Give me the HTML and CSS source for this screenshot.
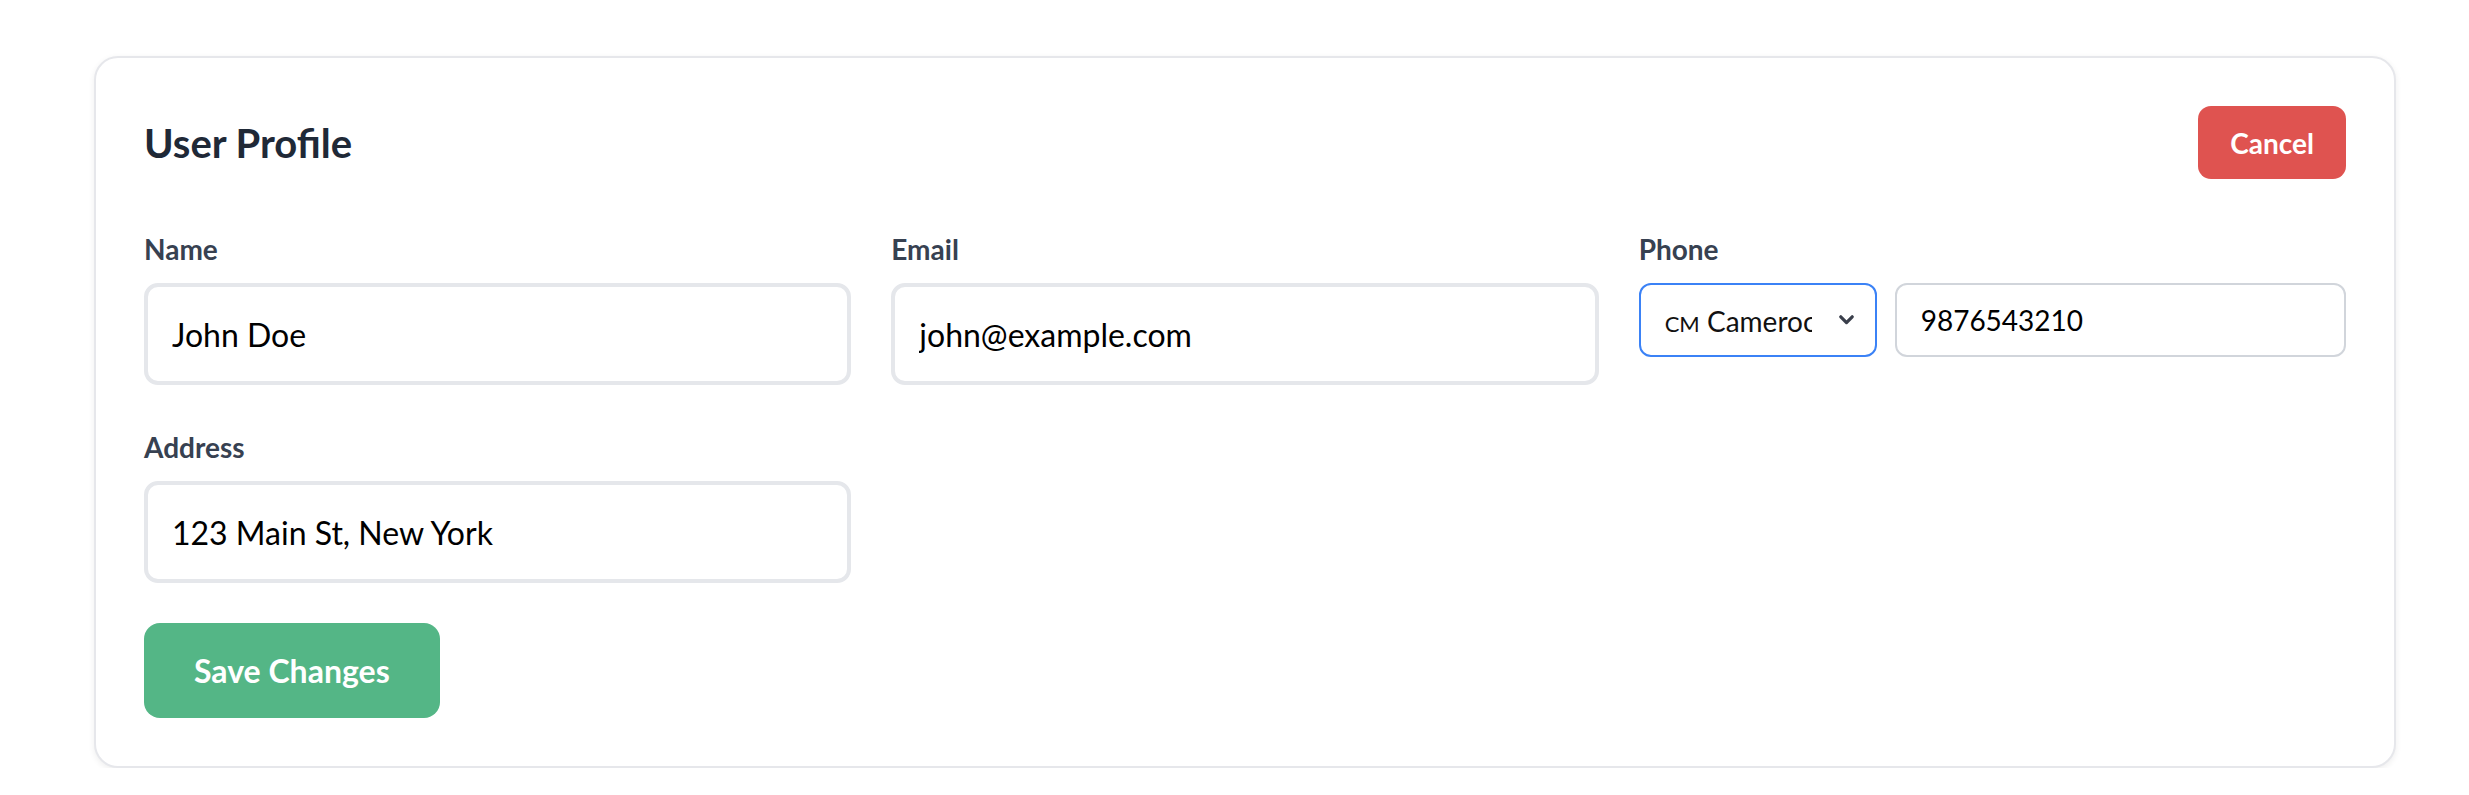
FILE: index.html
```html
<!DOCTYPE html>
<html lang="en">
<head>
<meta charset="utf-8">
<title>User Profile</title>
<link rel="stylesheet" href="styles.css">
</head>
<body>
<main class="page">
  <section class="card">
    <header class="card-header">
      <h1 class="title">User Profile</h1>
      <button class="btn btn-cancel" type="button">Cancel</button>
    </header>
    <form class="form">
      <div class="grid">
        <div class="field">
          <label class="label" for="name">Name</label>
          <input class="input" id="name" type="text" value="John Doe">
        </div>
        <div class="field">
          <label class="label" for="email">Email</label>
          <input class="input" id="email" type="email" value="john@example.com">
        </div>
        <div class="field">
          <label class="label" for="phone">Phone</label>
          <div class="phone-row">
            <div class="select" role="combobox" aria-expanded="false">
              <span class="select-text"><span class="flag">CM</span> Cameroon (+237)</span>
              <svg class="chevron" width="15" height="10" viewBox="0 0 15 10" aria-hidden="true">
                <polyline points="1.8,1.8 7.5,7.6 13.2,1.8" fill="none" stroke="#3a3f4b" stroke-width="3.2" stroke-linecap="round" stroke-linejoin="round"/>
              </svg>
            </div>
            <input class="input input-phone" id="phone" type="tel" value="9876543210">
          </div>
        </div>
        <div class="field">
          <label class="label" for="address">Address</label>
          <input class="input" id="address" type="text" value="123 Main St, New York">
        </div>
      </div>
      <button class="btn btn-save" type="button">Save Changes</button>
    </form>
  </section>
</main>
</body>
</html>
```

FILE: styles.css
```css
* {
  box-sizing: border-box;
}

html, body {
  margin: 0;
  padding: 0;
  background: #ffffff;
}

body {
  font-family: "Segoe UI", Lato, "Noto Sans", sans-serif;
  color: #111827;
}

.page {
  padding: 56px 73px 0 94px;
}

.card {
  background: #ffffff;
  border: 2px solid #e6e7eb;
  border-radius: 24px;
  padding: 48px;
  box-shadow: 0 2px 6px rgba(0, 0, 0, 0.07);
}

.card-header {
  display: flex;
  align-items: center;
  justify-content: space-between;
  margin-bottom: 48px;
}

.title {
  margin: 0;
  font-size: 40px;
  line-height: 56px;
  font-weight: 700;
  color: #1f2937;
}

.btn {
  border: none;
  color: #ffffff;
  font-family: inherit;
  font-weight: 700;
  cursor: pointer;
}

.btn-cancel {
  background: #df5350;
  font-size: 28px;
  line-height: 40px;
  padding: 16.5px 32px;
  border-radius: 13px;
}

.grid {
  display: grid;
  grid-template-columns: repeat(3, 1fr);
  gap: 40px;
}

.field {
  display: flex;
  flex-direction: column;
  min-width: 0;
}

.label {
  font-size: 28px;
  line-height: 40px;
  font-weight: 700;
  color: #374151;
  padding-top: 2px;
  margin-bottom: 14px;
}

.input {
  height: 102px;
  width: 100%;
  border: 4px solid #e5e7eb;
  border-radius: 14px;
  padding: 0 24px;
  font-family: inherit;
  font-size: 32px;
  color: #000000;
  background: #ffffff;
  outline: none;
}

.phone-row {
  display: flex;
  gap: 18px;
}

.select {
  flex: 0 0 238px;
  width: 238px;
  min-width: 0;
  overflow: hidden;
  height: 74px;
  border: 2px solid #3b82f6;
  border-radius: 12px;
  padding: 0 21px 0 24px;
  display: flex;
  align-items: center;
  gap: 27px;
  font-size: 28px;
  color: #111111;
  background: #ffffff;
}

.select-text {
  flex: 1 1 0;
  min-width: 0;
  overflow: hidden;
  white-space: nowrap;
}

.flag {
  font-variant-caps: all-small-caps;
  font-size: 31px;
}

.chevron {
  flex: 0 0 15px;
  display: block;
}

.input-phone {
  flex: 1 1 0;
  width: auto;
  height: 74px;
  border: 2px solid #d1d5db;
  border-radius: 12px;
  font-size: 28px;
  min-width: 0;
}

.btn-save {
  margin-top: 40px;
  background: #54b686;
  font-size: 32px;
  line-height: 48px;
  padding: 23.5px 50px;
  border-radius: 16px;
}
```
